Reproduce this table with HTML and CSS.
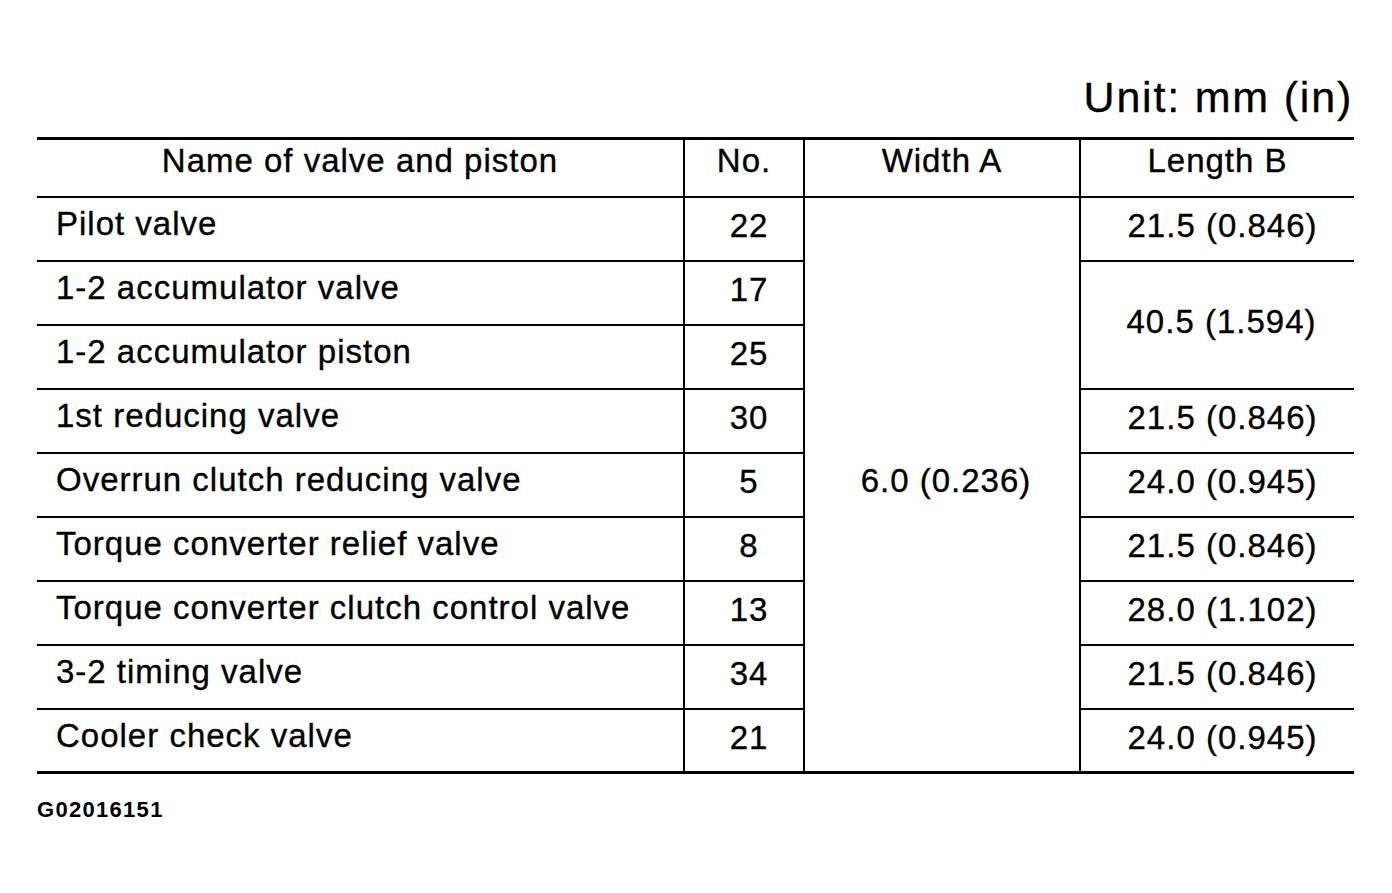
FILE: index.html
```html
<!DOCTYPE html>
<html>
<head>
<meta charset="utf-8">
<link rel="stylesheet" href="styles.css">
</head>
<body>
<div class="sheet">
  <div class="unit">Unit: mm (in)</div>
  <table class="spec">
    <thead>
      <tr>
        <th class="c-name">Name of valve and piston</th>
        <th class="c-no">No.</th>
        <th class="c-w">Width A</th>
        <th class="c-l">Length B</th>
      </tr>
    </thead>
    <tbody>
      <tr>
        <td class="name">Pilot valve</td>
        <td class="num">22</td>
        <td class="num mid full" rowspan="9">6.0 (0.236)</td>
        <td class="num">21.5 (0.846)</td>
      </tr>
      <tr>
        <td class="name">1-2 accumulator valve</td>
        <td class="num">17</td>
        <td class="num mid" rowspan="2">40.5 (1.594)</td>
      </tr>
      <tr>
        <td class="name">1-2 accumulator piston</td>
        <td class="num">25</td>
      </tr>
      <tr>
        <td class="name">1st reducing valve</td>
        <td class="num">30</td>
        <td class="num">21.5 (0.846)</td>
      </tr>
      <tr>
        <td class="name">Overrun clutch reducing valve</td>
        <td class="num">5</td>
        <td class="num">24.0 (0.945)</td>
      </tr>
      <tr>
        <td class="name">Torque converter relief valve</td>
        <td class="num">8</td>
        <td class="num">21.5 (0.846)</td>
      </tr>
      <tr>
        <td class="name">Torque converter clutch control valve</td>
        <td class="num">13</td>
        <td class="num">28.0 (1.102)</td>
      </tr>
      <tr>
        <td class="name">3-2 timing valve</td>
        <td class="num">34</td>
        <td class="num">21.5 (0.846)</td>
      </tr>
      <tr>
        <td class="name">Cooler check valve</td>
        <td class="num">21</td>
        <td class="num">24.0 (0.945)</td>
      </tr>
    </tbody>
  </table>
  <div class="code">G02016151</div>
</div>
</body>
</html>
```

FILE: styles.css
```css
html, body {
  margin: 0;
  padding: 0;
  background: #ffffff;
}

body {
  font-family: "Liberation Sans", Arial, Helvetica, sans-serif;
  color: #000;
  -webkit-text-stroke: 0.35px #000;
}

.sheet {
  width: 1317px;
  padding: 73px 0 0 37px;
}

.unit {
  text-align: right;
  font-size: 43px;
  line-height: 48px;
  letter-spacing: 1.8px;
  padding-right: 1px;
  height: 64px;
}

.spec {
  width: 1317px;
  border-collapse: collapse;
  table-layout: fixed;
  font-size: 33px;
  line-height: 36px;
  letter-spacing: 1px;
}

.spec th {
  font-weight: normal;
  text-align: center;
  vertical-align: top;
  height: 58px;
  padding: 3px 0 0 0;
  box-sizing: border-box;
  border-top: 3px solid #000;
  border-bottom: 2px solid #000;
  border-left: 2px solid #000;
}

.spec th:first-child,
.spec td.name {
  border-left: none;
}

.c-name { width: 647px; }
.c-no { width: 120px; }
.c-w { width: 276px; }
.c-l { width: 274px; }

.spec td {
  height: 64px;
  box-sizing: border-box;
  border-bottom: 2px solid #000;
  border-left: 2px solid #000;
  vertical-align: top;
  padding: 10px 0 0 0;
}

.spec tbody tr:last-child td,
.spec td.full {
  border-bottom: 3px solid #000;
}

.spec td.name {
  padding: 8px 0 0 19px;
  text-align: left;
}

.spec td.num {
  text-align: center;
  padding-left: 10px;
}

.spec td.mid {
  vertical-align: middle;
  padding: 0 0 6px 8px;
}

.code {
  margin-top: 23px;
  font-size: 22px;
  line-height: 26px;
  font-weight: bold;
  -webkit-text-stroke: 0;
  letter-spacing: 1.3px;
}
```
